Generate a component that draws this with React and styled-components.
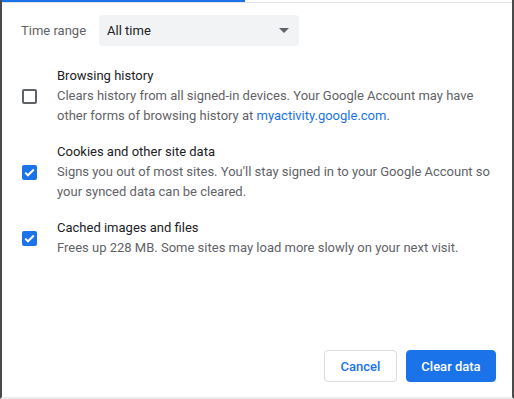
import React, { useState } from 'react';
import styled, { createGlobalStyle } from 'styled-components';

const GlobalStyle = createGlobalStyle`
  html, body {
    margin: 0;
    padding: 0;
    background: #fff;
  }
  body {
    font-family: Roboto, "Liberation Sans", Arial, sans-serif;
  }
`;

const Dialog = styled.div`
  width: 514px;
  height: 399px;
  box-sizing: border-box;
  border-left: 2px solid #4a4a4a;
  border-right: 2px solid #4a4a4a;
  border-bottom: 2px solid #ececec;
  display: flex;
  flex-direction: column;
  background: #fff;
`;

const Progress = styled.div`
  height: 3px;
  display: flex;
  align-items: flex-start;
  border-bottom: 1px solid #e3e3e3;
  box-sizing: border-box;
`;

const ProgressFill = styled.div`
  height: 2px;
  background: #1a73e8;
`;

const Body = styled.div`
  flex: 1;
  padding: 12px 16px 0 19px;
  display: flex;
  flex-direction: column;
`;

const RangeRow = styled.div`
  display: flex;
  align-items: center;
  gap: 13px;
`;

const Label = styled.span`
  font-size: 13px;
  color: #5f6368;
`;

const Select = styled.div`
  width: 200px;
  height: 31px;
  box-sizing: border-box;
  background: #f1f3f4;
  border-radius: 4px;
  display: flex;
  align-items: center;
  justify-content: space-between;
  padding: 0 10px 0 8px;
  font-size: 13px;
  color: #202124;
`;

const Caret = styled.span`
  width: 0;
  height: 0;
  border-left: 5px solid transparent;
  border-right: 5px solid transparent;
  border-top: 5px solid #5f6368;
`;

const List = styled.div`
  display: flex;
  flex-direction: column;
  gap: 16px;
  margin-top: 20px;
`;

const Item = styled.label`
  display: flex;
  align-items: center;
  cursor: pointer;
`;

const BoxCell = styled.div`
  width: 35px;
  display: flex;
  padding-left: 1px;
  flex-shrink: 0;
`;

const Box = styled.span`
  width: 15px;
  height: 15px;
  box-sizing: border-box;
  border-radius: 2px;
  border: ${({ checked }) => (checked ? 'none' : '2px solid #5f6368')};
  background: ${({ checked }) => (checked ? '#1a73e8' : 'transparent')};
  display: flex;
  align-items: center;
  justify-content: center;
`;

const Text = styled.div`
  font-size: 13px;
  line-height: 20px;
`;

const Title = styled.div`
  color: #202124;
`;

const Desc = styled.div`
  color: #5f6368;
`;

const Link = styled.a`
  color: #1a73e8;
  text-decoration: none;
`;

const Footer = styled.div`
  display: flex;
  justify-content: flex-end;
  gap: 9px;
  padding: 0 16px 15px 0;
`;

const Button = styled.button`
  height: 32px;
  box-sizing: border-box;
  padding: 0;
  border-radius: 4px;
  font-family: Roboto, "Liberation Sans", Arial, sans-serif;
  font-size: 13px;
  font-weight: 500;
  cursor: pointer;
  border: 1px solid ${({ primary }) => (primary ? '#1a73e8' : '#dadce0')};
  background: ${({ primary }) => (primary ? '#1a73e8' : '#fff')};
  color: ${({ primary }) => (primary ? '#fff' : '#1a73e8')};
  width: ${({ primary }) => (primary ? '90px' : '73px')};
`;

const Check = () => (
  <svg width="11" height="9" viewBox="0 0 11 9">
    <path d="M1.2 4.6 L4 7.3 L9.8 1.5" fill="none" stroke="#fff" strokeWidth="2" />
  </svg>
);

const items = [
  {
    title: 'Browsing history',
    desc: (
      <>
        Clears history from all signed-in devices. Your Google Account may have other forms of
        browsing history at <Link href="#">myactivity.google.com</Link>.
      </>
    ),
    checked: false,
  },
  {
    title: 'Cookies and other site data',
    desc: "Signs you out of most sites. You'll stay signed in to your Google Account so your synced data can be cleared.",
    checked: true,
  },
  {
    title: 'Cached images and files',
    desc: 'Frees up 228 MB. Some sites may load more slowly on your next visit.',
    checked: true,
  },
];

const App = () => {
  const [checks, setChecks] = useState(items.map((i) => i.checked));

  const toggle = (idx) => setChecks(checks.map((c, i) => (i === idx ? !c : c)));

  return (
    <>
      <GlobalStyle />
      <Dialog>
        <Progress>
          <ProgressFill style={{ width: 243 }} />
        </Progress>
        <Body>
          <RangeRow>
            <Label>Time range</Label>
            <Select>
              All time
              <Caret />
            </Select>
          </RangeRow>
          <List>
            {items.map((item, idx) => (
              <Item key={idx} onClick={() => toggle(idx)}>
                <BoxCell>
                  <Box checked={checks[idx]}>{checks[idx] && <Check />}</Box>
                </BoxCell>
                <Text>
                  <Title>{item.title}</Title>
                  <Desc>{item.desc}</Desc>
                </Text>
              </Item>
            ))}
          </List>
        </Body>
        <Footer>
          <Button>Cancel</Button>
          <Button primary>Clear data</Button>
        </Footer>
      </Dialog>
    </>
  );
};

export default App;
